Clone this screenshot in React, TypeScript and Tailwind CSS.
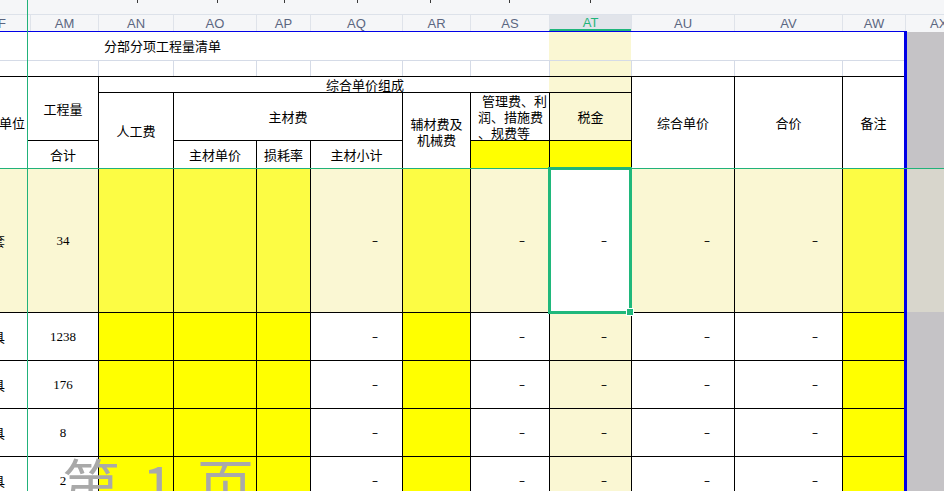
/** Spreadsheet view: 分部分项工程量清单, columns AM–AW with the AT cell selected. */

import type { ReactNode } from 'react';

const LY = 'bg-[#faf7d3]';
const YEL = 'bg-[#ffff00]';
const YHL = 'bg-[#fcfc44]';

function Cell({ className = '', children }: { className?: string; children?: ReactNode }) {
  return (
    <div className={`flex items-center overflow-hidden whitespace-nowrap ${className}`}>{children}</div>
  );
}

function Dash() {
  return <span className="font-['DejaVu_Sans',sans-serif] text-[12px] leading-none">–</span>;
}

const headerCols = [
  { label: 'F', cls: 'w-[30px] justify-end pr-[24px]' },
  { label: 'AM', cls: 'w-[68px] justify-center border-l' },
  { label: 'AN', cls: 'w-[75px] justify-center border-l' },
  { label: 'AO', cls: 'w-[83px] justify-center border-l' },
  { label: 'AP', cls: 'w-[54px] justify-center border-l' },
  { label: 'AQ', cls: 'w-[92px] justify-center border-l' },
  { label: 'AR', cls: 'w-[68px] justify-center border-l' },
  { label: 'AS', cls: 'w-[79px] justify-center border-l' },
  { label: 'AT', cls: 'w-[82px] justify-center border-l border-b-2 border-b-[#1fb57b] bg-[#e1e4ea] text-[#1fb57b]' },
  { label: 'AU', cls: 'w-[103px] justify-center border-l' },
  { label: 'AV', cls: 'w-[108px] justify-center border-l' },
  { label: 'AW', cls: 'w-[63px] justify-center border-l' },
  { label: 'AX', cls: 'flex-1 justify-start pl-[24px] border-l' },
];

const ticks = ['ml-[137px]', 'ml-[79px]', 'ml-[66px]', 'ml-[72px]', 'ml-[72px]', 'ml-[78px]', 'ml-[80px]'];

const rows = [
  { unit: '套', qty: '34', row: 'row-start-6', hl: true },
  { unit: '具', qty: '1238', row: 'row-start-7', hl: false },
  { unit: '具', qty: '176', row: 'row-start-8', hl: false },
  { unit: '具', qty: '8', row: 'row-start-9', hl: false },
  { unit: '具', qty: '2', row: 'row-start-10', hl: false },
];

function DataRow({ unit, qty, row, hl }: { unit: string; qty: string; row: string; hl: boolean }) {
  const w = hl ? LY : 'bg-white';
  const y = hl ? YHL : YEL;
  const b = 'border-t border-l border-black';
  return (
    <>
      <Cell className={`${row} col-start-1 justify-end border-t border-black pr-[22px] ${w}`}>{unit}</Cell>
      <Cell className={`${row} col-start-2 justify-center font-['Liberation_Serif',serif] ${b} ${w}`}>{qty}</Cell>
      <Cell className={`${row} col-start-3 ${b} ${y}`} />
      <Cell className={`${row} col-start-4 ${b} ${y}`} />
      <Cell className={`${row} col-start-5 ${b} ${y}`} />
      <Cell className={`${row} col-start-6 justify-end pr-[24px] ${b} ${w}`}><Dash /></Cell>
      <Cell className={`${row} col-start-7 ${b} ${y}`} />
      <Cell className={`${row} col-start-8 justify-end pr-[24px] ${b} ${w}`}><Dash /></Cell>
      {hl ? (
        <Cell className={`${row} relative col-start-9 justify-end overflow-visible pr-[24px] ${b} bg-white`}>
          <Dash />
          <div className="absolute -top-[2px] -bottom-[2px] -left-[2px] -right-px border-[3px] border-[#1fb87b]">
            <div className="absolute -right-[4px] -bottom-[4px] h-[6px] w-[6px] bg-[#1fb87b] ring-1 ring-white" />
          </div>
        </Cell>
      ) : (
        <Cell className={`${row} col-start-9 justify-end pr-[24px] ${b} ${LY}`}><Dash /></Cell>
      )}
      <Cell className={`${row} col-start-10 justify-end pr-[24px] ${b} ${w}`}><Dash /></Cell>
      <Cell className={`${row} col-start-11 justify-end pr-[24px] ${b} ${w}`}><Dash /></Cell>
      <Cell className={`${row} col-start-12 ${b} ${y}`} />
    </>
  );
}

export default function App() {
  const g = 'border-t border-l border-[#d5dbe7]';
  const h = 'border-t border-l border-black';
  return (
    <div className="relative h-[491px] w-[944px] overflow-hidden bg-white font-['Noto_Sans_CJK_SC',sans-serif] text-[13px] text-black">
      {/* cut-off toolbar row above the column letters */}
      <div className="flex h-[15px] items-start border-b border-[#dde2ea] bg-[#f5f6f8]">
        {ticks.map((t, i) => (
          <span key={i} className={`${t} h-[3px] w-px bg-[#3a3a3a]`} />
        ))}
      </div>

      {/* column letters */}
      <div className="flex h-[16px] bg-[#f5f6f8] font-['Liberation_Sans',sans-serif] text-[13px] leading-none text-[#5b6681]">
        {headerCols.map((c) => (
          <div key={c.label} className={`flex items-center overflow-hidden whitespace-nowrap border-[#dfe3ea] ${c.cls}`}>
            {c.label}
          </div>
        ))}
      </div>
      <div className="flex h-px">
        <div className="w-[907px] bg-[#0000e6]" />
        <div className="flex-1 bg-[#f5f6f8]" />
      </div>

      {/* sheet */}
      <div className="grid grid-cols-[27px_71px_75px_83px_54px_92px_68px_79px_82px_103px_108px_62px_3px_37px] grid-rows-[28px_16px_16px_48px_28px_144px_48px_48px_48px_48px]">
        {/* row 1: title */}
        <Cell className="col-start-1 row-start-1" />
        <Cell className="col-start-2 col-span-7 row-start-1 pl-[77px]">分部分项工程量清单</Cell>
        <Cell className={`col-start-9 row-start-1 ${LY}`} />
        <Cell className="col-start-10 col-span-3 row-start-1" />

        {/* row 2: empty */}
        <Cell className="col-start-1 row-start-2 border-t border-[#d5dbe7]" />
        <Cell className={`col-start-2 row-start-2 ${g}`} />
        <Cell className={`col-start-3 row-start-2 ${g}`} />
        <Cell className={`col-start-4 row-start-2 ${g}`} />
        <Cell className={`col-start-5 row-start-2 ${g}`} />
        <Cell className={`col-start-6 row-start-2 ${g}`} />
        <Cell className={`col-start-7 row-start-2 ${g}`} />
        <Cell className={`col-start-8 row-start-2 ${g}`} />
        <Cell className={`col-start-9 row-start-2 ${g} ${LY}`} />
        <Cell className={`col-start-10 row-start-2 ${g}`} />
        <Cell className={`col-start-11 row-start-2 ${g}`} />
        <Cell className={`col-start-12 row-start-2 ${g}`} />

        {/* table header */}
        <Cell className="col-start-1 row-start-3 row-span-3 justify-end border-t border-black pr-[2px]">单位</Cell>
        <Cell className={`col-start-2 row-start-3 row-span-2 justify-center ${h}`}>工程量</Cell>
        <Cell className={`col-start-2 row-start-5 justify-center ${h}`}>合计</Cell>
        <Cell className={`col-start-3 col-span-7 row-start-3 justify-center ${h} bg-[linear-gradient(to_right,#ffffff_450px,#faf7d3_450px)]`}>
          <span className="text-[13px] leading-[15px]">综合单价组成</span>
        </Cell>
        <Cell className={`col-start-3 row-start-4 row-span-2 justify-center ${h}`}>人工费</Cell>
        <Cell className={`col-start-4 col-span-3 row-start-4 justify-center ${h}`}>主材费</Cell>
        <Cell className={`col-start-4 row-start-5 justify-center ${h}`}>主材单价</Cell>
        <Cell className={`col-start-5 row-start-5 justify-center ${h}`}>损耗率</Cell>
        <Cell className={`col-start-6 row-start-5 justify-center ${h}`}>主材小计</Cell>
        <Cell className={`col-start-7 row-start-4 row-span-2 justify-center ${h}`}>
          <span className="block pt-[2px] text-center leading-[16px]">
            辅材费及
            <br />
            机械费
          </span>
        </Cell>
        <Cell className={`col-start-8 row-start-4 pl-[7px] ${h}`}>
          <span className="block leading-[16px]">
            <span className="pl-[4px]">管理费、利</span>
            <br />
            润、措施费
            <br />
            、规费等
          </span>
        </Cell>
        <Cell className={`col-start-8 row-start-5 ${h} ${YEL}`} />
        <Cell className={`col-start-9 row-start-4 justify-center ${h} ${LY}`}>税金</Cell>
        <Cell className={`col-start-9 row-start-5 ${h} ${YEL}`} />
        <Cell className={`col-start-10 row-start-3 row-span-3 justify-center ${h}`}>综合单价</Cell>
        <Cell className={`col-start-11 row-start-3 row-span-3 justify-center ${h}`}>合价</Cell>
        <Cell className={`col-start-12 row-start-3 row-span-3 justify-center ${h}`}>备注</Cell>

        {/* data rows */}
        {rows.map((r) => (
          <DataRow key={r.row} {...r} />
        ))}

        {/* print-area edge and the area past it */}
        <div className="col-start-13 row-start-1 row-span-10 bg-[#0000e6]" />
        <div className="col-start-14 row-start-1 row-span-5 bg-[#c5c3c6]" />
        <div className="col-start-14 row-start-6 bg-[#d8d6cc]" />
        <div className="col-start-14 row-start-7 row-span-4 bg-[#c5c3c6]" />
      </div>

      {/* frozen pane lines */}
      <div className="absolute left-[27px] top-0 h-full w-px bg-[#21b27a]" />
      <div className="absolute left-0 top-[168px] h-px w-full bg-[#21b27a]" />

      {/* page watermark */}
      <div className="pointer-events-none absolute left-[62px] top-[454px] flex text-[58px] leading-none text-[#a9a9a9]">
        <span>第</span>
        <span className="ml-[22px]">1</span>
        <span className="ml-[22px]">页</span>
      </div>
    </div>
  );
}
